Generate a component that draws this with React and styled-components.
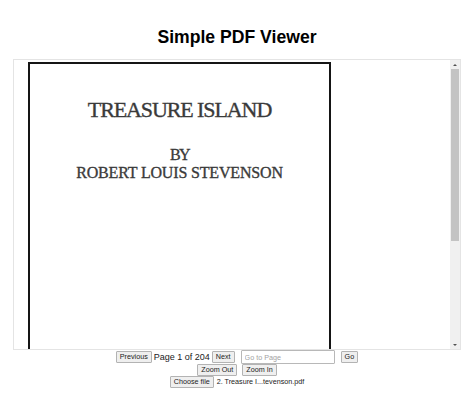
import React from "react";
import styled, { createGlobalStyle } from "styled-components";

const GlobalStyle = createGlobalStyle`
  html, body {
    margin: 0;
    padding: 0;
    background: #ffffff;
    font-family: "Liberation Sans", Arial, sans-serif;
  }
`;

const Wrapper = styled.div`
  width: 474px;
  display: flex;
  flex-direction: column;
  align-items: center;
`;

const Title = styled.h1`
  margin: 0 0 12px;
  padding-top: 27px;
  font-size: 17.6px;
  line-height: 20px;
  font-weight: bold;
  color: #000;
  text-align: center;
`;

const Viewer = styled.div`
  box-sizing: border-box;
  width: 448px;
  height: 291px;
  border: 1px solid #e4e4e4;
  display: flex;
  overflow: hidden;
  background: #fff;
`;

const ScrollArea = styled.div`
  flex: 1;
  overflow: hidden;
`;

const Rail = styled.div`
  width: 10px;
  display: flex;
  flex-direction: column;
  background: #f0f0f0;
`;

const Arrow = styled.div`
  height: 9px;
  display: flex;
  align-items: center;
  justify-content: center;
  &::after {
    content: "";
    width: 0;
    height: 0;
    border-left: 2px solid transparent;
    border-right: 2px solid transparent;
    ${(p) =>
      p.$down
        ? "border-top: 2px solid #505050;"
        : "border-bottom: 2px solid #505050;"}
  }
`;

const Track = styled.div`
  flex: 1;
  display: flex;
  flex-direction: column;
`;

const Thumb = styled.div`
  height: 172px;
  margin: 0 1px;
  background: #c3c3c3;
`;

const Sheet = styled.div`
  padding: 2px 0 10px 14px;
`;

const PageCanvas = styled.div`
  box-sizing: border-box;
  width: 303px;
  height: 440px;
  border: 2px solid #151515;
  padding-top: 33px;
  display: flex;
  flex-direction: column;
  align-items: center;
  font-family: "Liberation Serif", "Times New Roman", serif;
  color: #3a3a3a;
  -webkit-text-stroke: 0.35px #3a3a3a;
`;

const BookTitle = styled.div`
  font-size: 22px;
  line-height: 26px;
  letter-spacing: -1.1px;
  white-space: nowrap;
`;

const Byline = styled.div`
  margin-top: ${(p) => p.$gap || 0}px;
  font-size: 16px;
  line-height: 18px;
  letter-spacing: ${(p) => p.$spacing || -0.17}px;
  white-space: nowrap;
`;

const Controls = styled.div`
  display: flex;
  flex-direction: column;
  align-items: center;
`;

const Row = styled.div`
  display: flex;
  align-items: center;
  justify-content: center;
  gap: ${(p) => p.$gap || 2}px;
  height: ${(p) => p.$height || 12}px;
`;

const Button = styled.button`
  box-sizing: border-box;
  margin: 0;
  padding: 1px 3px;
  height: 12px;
  font-family: "Liberation Sans", Arial, sans-serif;
  font-size: 7.2px;
  line-height: 8px;
  color: #222;
  background: #efefef;
  border: 1px solid #b3b3b3;
  border-radius: 1px;
`;

const PageInfo = styled.span`
  font-size: 9px;
  line-height: 11px;
  color: #222;
  white-space: nowrap;
`;

const PageInput = styled.input`
  box-sizing: border-box;
  width: 94px;
  height: 14px;
  margin: 0 4px;
  padding: 1px 3px;
  font-family: "Liberation Sans", Arial, sans-serif;
  font-size: 7.2px;
  line-height: 10px;
  border: 1px solid #b8b8b8;
  border-radius: 1px;
  color: #222;
  &::placeholder {
    color: #a3a3a3;
  }
`;

const FileName = styled.span`
  font-size: 7.2px;
  line-height: 10px;
  color: #222;
  white-space: nowrap;
`;

export default function App() {
  return (
    <>
      <GlobalStyle />
      <Wrapper>
        <Title>Simple PDF Viewer</Title>
        <Viewer>
          <ScrollArea>
            <Sheet>
              <PageCanvas>
                <BookTitle>TREASURE ISLAND</BookTitle>
                <Byline $gap={23.4} $spacing={-1.5}>
                  BY
                </Byline>
                <Byline>ROBERT LOUIS STEVENSON</Byline>
              </PageCanvas>
            </Sheet>
          </ScrollArea>
          <Rail>
            <Arrow />
            <Track>
              <Thumb />
            </Track>
            <Arrow $down />
          </Rail>
        </Viewer>
        <Controls>
          <Row $height={14}>
            <Button>Previous</Button>
            <PageInfo>Page 1 of 204</PageInfo>
            <Button>Next</Button>
            <PageInput placeholder="Go to Page" />
            <Button>Go</Button>
          </Row>
          <Row $gap={5}>
            <Button>Zoom Out</Button>
            <Button>Zoom In</Button>
          </Row>
          <Row $gap={3}>
            <Button>Choose file</Button>
            <FileName>2. Treasure I...tevenson.pdf</FileName>
          </Row>
        </Controls>
      </Wrapper>
    </>
  );
}
